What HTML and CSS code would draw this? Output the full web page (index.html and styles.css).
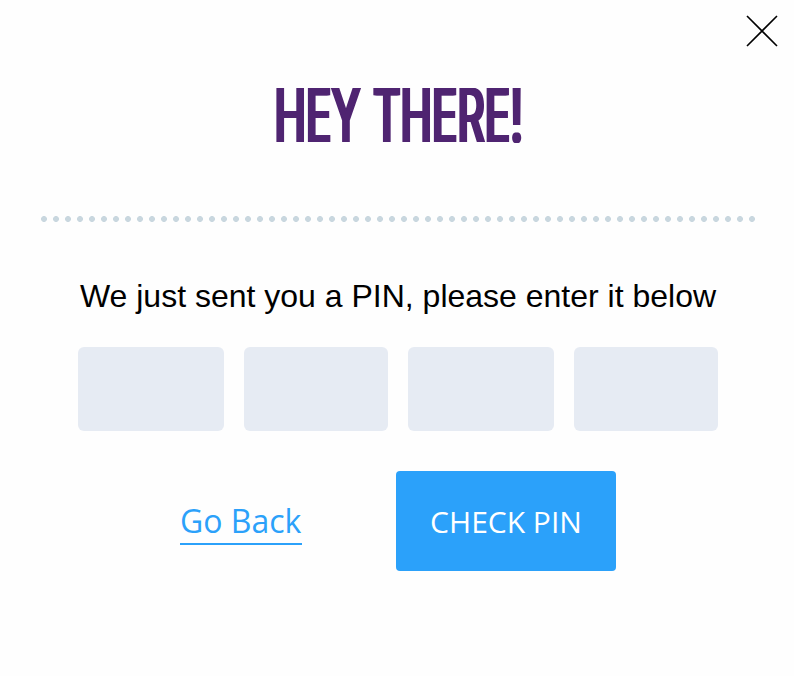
FILE: index.html
```
<!DOCTYPE html>
<html lang="en">
<head>
    <title>Enter your PIN</title>
    <meta charset="utf-8">
    <meta name="viewport" content="width=device-width, initial-scale=1.0">
    <link rel="stylesheet" href="styles.css">
</head>
<body>
    <div class="modal">
        <div class="top-bar">
            <button type="button" class="close" aria-label="Close">
                <svg width="32" height="32" viewBox="0 0 32 32"><path d="M1 1L31 31M31 1L1 31"/></svg>
            </button>
        </div>
        <h1 class="title">
            <svg width="250" height="56" viewBox="0 0 250 56">
                <text x="0" y="55" textLength="248.5" lengthAdjust="spacingAndGlyphs">HEY THERE!</text>
            </svg>
        </h1>
        <div class="dots"></div>
        <form>
            <p class="message">We just sent you a PIN, please enter it below</p>
            <div class="pin">
                <input type="text" maxlength="1">
                <input type="text" maxlength="1" class="narrow">
                <input type="text" maxlength="1">
                <input type="text" maxlength="1" class="narrow">
            </div>
            <div class="actions">
                <a href="#" class="back">Go Back</a>
                <button type="button" class="check">CHECK PIN</button>
            </div>
        </form>
    </div>
</body>
</html>
```
FILE: styles.css
```
* { margin: 0; padding: 0; box-sizing: border-box; }
body {
    min-height: 100vh; background: #fefefe; color: #000;
    font-family: 'Liberation Sans', Helvetica, Arial, sans-serif;
    overflow: hidden;
}
.modal { width: 794px; }
.top-bar { display: flex; justify-content: flex-end; padding: 15px 16px 0 0; }
.close { width: 32px; height: 32px; border: none; background: none; cursor: pointer; }
.close svg { display: block; fill: none; stroke: #000; stroke-width: 1.6; }
.title { display: flex; padding: 40px 0 0 274px; }
/* sideways shadows thicken the stems but not the bars */
.title svg {
    display: block; overflow: visible;
    filter: drop-shadow(2px 0 0 #4f2471) drop-shadow(-1px 0 0 #4f2471);
}
.title text {
    font-family: Inter, sans-serif; font-size: 74.5px; font-weight: 500;
    fill: #4f2471; word-spacing: 2px;
}
.dots {
    width: 720px; height: 6px; margin: 73px 0 0 41px;
    background: radial-gradient(circle at 3px 3px, #c9d7df 2.6px, transparent 3.3px) 0 0 / 12px 6px repeat-x;
}
.message {
    margin-top: 56px; text-align: center; line-height: 36px;
    font-size: 32px; white-space: nowrap; padding-left: 2px;
}
.pin { display: flex; gap: 20px; padding: 33px 0 0 78px; }
.pin input {
    width: 146px; height: 84px; border: none; border-radius: 6px;
    background: #e6ebf3; text-align: center; font-size: 32px; outline: none;
}
.pin .narrow { width: 144px; }
.actions {
    display: flex; align-items: center; gap: 94px; padding: 40px 0 0 180px;
    font-family: 'Open Sans', sans-serif;
}
.back {
    width: 122px; height: 46px; margin-top: 2px; border-bottom: 2px solid #2ba1fa;
    color: #2ba1fa; font-size: 32px; line-height: 44px;
    text-decoration: none; white-space: nowrap;
}
.check {
    width: 220px; height: 100px; border: none; border-radius: 4px;
    background: #2ba1fa; color: #fff; cursor: pointer;
    font-family: 'Open Sans', sans-serif; font-size: 30px; font-weight: 400;
}
```
